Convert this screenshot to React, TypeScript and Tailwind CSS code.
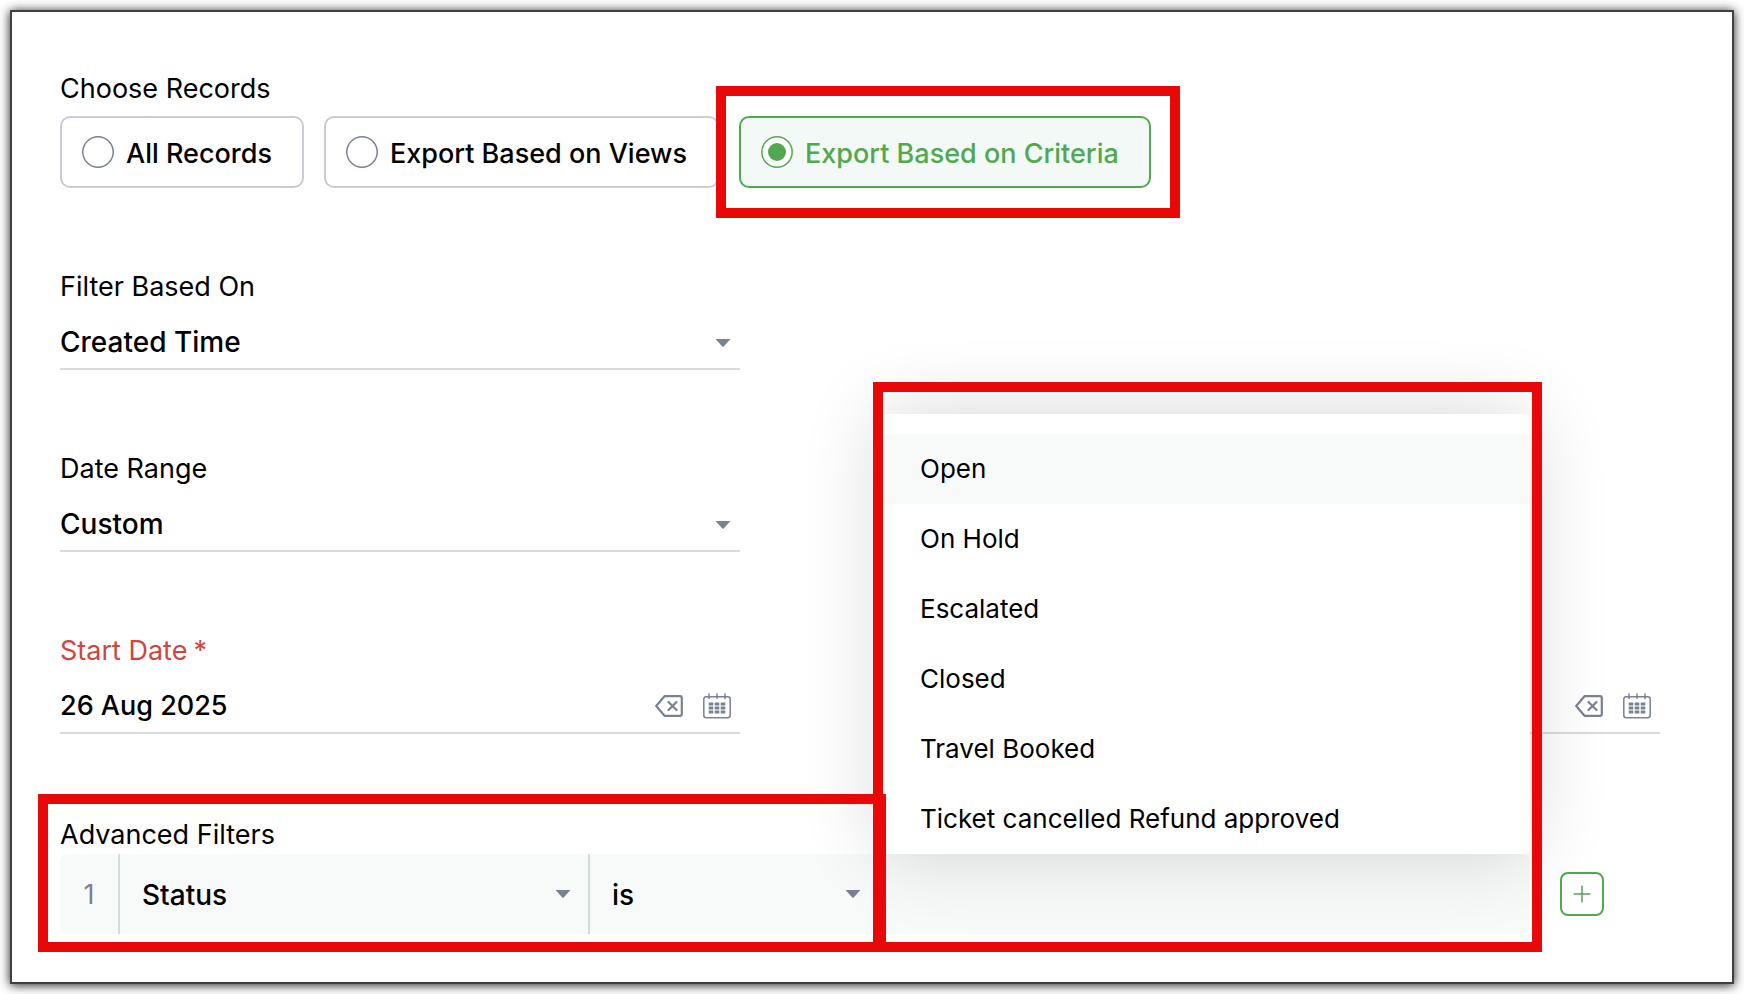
// Export panel: record scope, time filters and the advanced criteria row, with
// the status picker open and the relevant areas outlined in red.

import { useState, type ReactNode } from "react";

const SCOPES = ["All Records", "Export Based on Views", "Export Based on Criteria"];

const STATUSES = [
  "Open",
  "On Hold",
  "Escalated",
  "Closed",
  "Travel Booked",
  "Ticket cancelled Refund approved",
];

function Caret() {
  return (
    <svg width="16" height="8" viewBox="0 0 16 8" className="text-[#7b8194]" aria-hidden="true">
      <path d="M0.5 0h15L8.7 7.4a1 1 0 0 1-1.4 0z" fill="currentColor" />
    </svg>
  );
}

function ClearIcon() {
  return (
    <svg width="28" height="22" viewBox="0 0 28 22" fill="none" stroke="currentColor" strokeWidth="2.2" strokeLinejoin="round" strokeLinecap="round" aria-hidden="true">
      <path d="M9.5 1.2H25a1.8 1.8 0 0 1 1.8 1.8v16a1.8 1.8 0 0 1-1.8 1.8H9.5L1.2 11z" />
      <path d="M13.5 7l8 8M21.5 7l-8 8" />
    </svg>
  );
}

function CalendarIcon() {
  return (
    <svg width="28" height="26" viewBox="0 0 28 26" fill="none" stroke="currentColor" strokeWidth="1.5" aria-hidden="true">
      <rect x="0.8" y="3.8" width="26.4" height="21" rx="2.5" />
      <path d="M6 0.5v5.5M14 0.5v5.5M22 0.5v5.5" />
      <path d="M5.7 11h4.6M11.7 11h4.6M17.7 11h4.6M5.7 15h4.6M11.7 15h4.6M17.7 15h4.6M5.7 19h4.6M11.7 19h4.6M17.7 19h4.6" strokeWidth="3" />
    </svg>
  );
}

function Highlight({ className }: { className: string }) {
  return <div className={`pointer-events-none absolute border-10 border-[#e90808] ${className}`} />;
}

function SelectField({ id, label, value }: { id: string; label: string; value: string }) {
  return (
    <div>
      <label htmlFor={id} className="block">
        {label}
      </label>
      <div className="relative mt-2.5 flex items-center">
        <select
          id={id}
          defaultValue={value}
          className="h-[54px] w-full appearance-none border-b-2 border-[#d6ddd9] bg-transparent text-[28px] font-medium outline-none"
        >
          <option>{value}</option>
        </select>
        <div className="pointer-events-none absolute right-[9px]">
          <Caret />
        </div>
      </div>
    </div>
  );
}

function DateField({ id, label, value }: { id: string; label: string; value?: string }) {
  return (
    <div>
      <label htmlFor={id} className="flex gap-1.5 text-[#cf4540]">
        {label}
        <span>*</span>
      </label>
      <div className="mt-2.5 flex h-[54px] items-center border-b-2 border-[#d6ddd9] pr-[9px]">
        <input id={id} type="text" defaultValue={value} className="min-w-0 flex-1 font-medium outline-none" />
        <div className="flex items-center gap-5 text-[#7b8194]">
          <button type="button" aria-label={`Clear ${label}`}>
            <ClearIcon />
          </button>
          <button type="button" aria-label={`Pick ${label}`}>
            <CalendarIcon />
          </button>
        </div>
      </div>
    </div>
  );
}

function CriteriaSelect({ label, value, children }: { label: string; value: string; children?: ReactNode }) {
  return (
    <div className="relative flex items-center border-l-2 border-[#d3ddd7]">
      <select
        aria-label={label}
        defaultValue={value}
        className="h-full w-full appearance-none bg-transparent pt-0.5 pl-[22px] text-[28px] font-medium outline-none"
      >
        <option>{value}</option>
      </select>
      {children}
    </div>
  );
}

export default function App() {
  const [scope, setScope] = useState(SCOPES[2]);

  return (
    <div className="min-h-screen bg-white p-2.5 font-['Inter','Liberation_Sans',sans-serif] text-[27px] leading-[38px] text-black">
      <main className="min-h-[calc(100vh-20px)] border-2 border-[#404040] bg-white pt-[58px] pr-[72px] pb-12 pl-12 shadow-[0_1px_10px_rgba(0,0,0,0.9)]">
        <fieldset>
          <legend>Choose Records</legend>
          <div className="mt-2 flex gap-5">
            {SCOPES.map((name) => {
              const active = name === scope;
              return (
                <div key={name} className="relative">
                  <label
                    className={`flex h-[72px] items-center gap-3 rounded-[10px] border-2 pr-[30px] pl-5 font-medium whitespace-nowrap ${
                      active ? "border-[#52a850] bg-[#f3f9f6] text-[#52a850]" : "border-[#cacada] bg-white"
                    }`}
                  >
                    <input
                      type="radio"
                      name="scope"
                      checked={active}
                      onChange={() => setScope(name)}
                      className="sr-only"
                    />
                    <svg width="32" height="32" viewBox="0 0 32 32" aria-hidden="true">
                      <circle cx="16" cy="16" r="15.2" fill="#fff" stroke={active ? "#52a850" : "#7b8194"} strokeWidth="1.5" />
                      {active && <circle cx="16" cy="16" r="9" fill="#52a850" />}
                    </svg>
                    <span className="pt-1">{name}</span>
                  </label>
                  {name === "Export Based on Criteria" && <Highlight className="-inset-y-[30px] -right-[29px] -left-[23px]" />}
                </div>
              );
            })}
          </div>
        </fieldset>

        <div className="mt-20 grid grid-cols-2 gap-x-60 gap-y-20">
          <SelectField id="filter-on" label="Filter Based On" value="Created Time" />
          <div />
          <SelectField id="date-range" label="Date Range" value="Custom" />
          <div />
          <DateField id="start-date" label="Start Date" value="26 Aug 2025" />
          <DateField id="end-date" label="End Date" />
        </div>

        <section className="mt-[82px]">
          <h2>Advanced Filters</h2>
          <div className="flex items-center gap-[30px] pr-14">
            <div className="flex h-20 min-w-0 flex-1 rounded-lg bg-[#f8faf9]">
              {/* Raised so its outline stays above the open picker */}
              <div className="relative z-10 grid basis-[820px] grid-cols-[58px_470fr_292fr]">
                <span className="flex items-center justify-center pt-0.5 text-[#7b8194]">1</span>
                <CriteriaSelect label="Field" value="Status">
                  <div className="pointer-events-none absolute right-[17px]">
                    <Caret />
                  </div>
                </CriteriaSelect>
                <CriteriaSelect label="Operator" value="is">
                  <div className="pointer-events-none absolute right-[19px]">
                    <Caret />
                  </div>
                </CriteriaSelect>
                <Highlight className="-top-[60px] -right-1.5 -bottom-[18px] -left-[22px]" />
              </div>
              <div className="relative flex-1">
                <ul
                  role="listbox"
                  aria-label="Status"
                  className="absolute inset-x-0 bottom-full rounded-md bg-white pt-5 text-[26px] shadow-[0_0_80px_rgba(0,0,0,0.16)]"
                >
                  {STATUSES.map((status, i) => (
                    <li key={status} role="option" aria-selected={i === 0}>
                      <button
                        type="button"
                        className={`h-[70px] w-full pl-10 text-left whitespace-nowrap ${i === 0 ? "bg-[#f8faf9]" : ""}`}
                      >
                        {status}
                      </button>
                    </li>
                  ))}
                </ul>
                <Highlight className="-top-[472px] -right-3 -bottom-[18px] -left-[7px]" />
              </div>
            </div>
            <button
              type="button"
              aria-label="Add criteria"
              className="flex size-11 items-center justify-center rounded-lg border-2 border-[#52a850] text-[#52a850]"
            >
              <svg width="18" height="18" viewBox="0 0 18 18" stroke="currentColor" strokeWidth="1.5" aria-hidden="true">
                <path d="M9 0.5v17M0.5 9h17" />
              </svg>
            </button>
          </div>
        </section>
      </main>
    </div>
  );
}
